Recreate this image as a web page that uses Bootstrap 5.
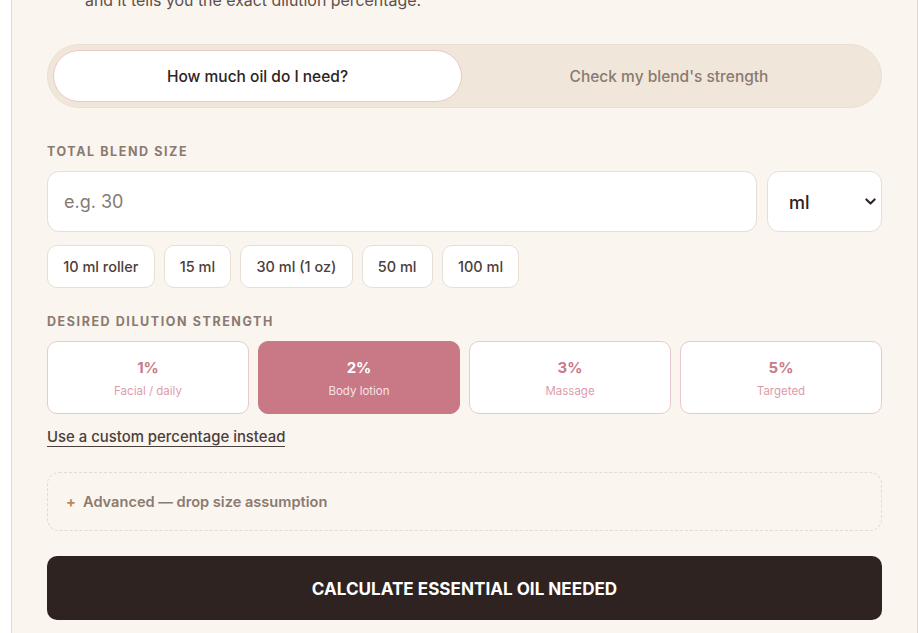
<!DOCTYPE html>
<html lang="en">
<head>
    <meta charset="UTF-8">
    <title>Essential Oil Dilution Calculator</title>
    <link href="https://cdn.jsdelivr.net/npm/bootstrap@5.3.0/dist/css/bootstrap.min.css" rel="stylesheet">
    <style>
        html, body { height: 100%; overflow: hidden; }
        body { font-family: "Inter", "Open Sans", sans-serif; background: #fff; color: #2e2321; }
        .calc-card { margin: -12px 0 0 11px; height: 700px; padding: 0 35px; background: #fbf5ef; border: 1px solid #e2dad2; border-top: 0; border-bottom: 0; border-radius: 0; }
        .intro { margin: 0 0 31px 38px; height: 25px; font-size: 15.9px; line-height: 25px; color: #5c504b; font-weight: 400; white-space: nowrap; }
        .mode-tabs { height: 64px; padding: 5px; background: #f0e6da; border: 1px solid #eadfd2; border-radius: 32px; }
        .mode-tabs .btn { flex: 1 1 0; border: 1px solid transparent; border-radius: 26px; font-size: 15.5px; font-weight: 500; color: #8a7a70; padding: 1px 0 0; }
        .mode-tabs .btn.active { flex: 0 0 409px; background: #fff; color: #2e2321; border-color: #e8c9c6; }
        .field-label { display: block; margin: 25px 0 12px; font-size: 12.5px; line-height: 18px; height: 16px; font-weight: 700; letter-spacing: 1.58px; text-transform: uppercase; color: #8a7a70; }
        .first-label { margin-top: 35px; }
        .input-row { gap: 10px; }
        .amount { flex: 1 1 0; height: 61px; border: 1px solid #e8dfd4; border-radius: 12px; font-size: 18px; padding: 0 16px; color: #2e2321; }
        .amount::placeholder { color: #857a72; }
        .unit { flex: 0 0 115px; width: 115px; height: 61px; border: 1px solid #e8dfd4; border-radius: 12px; font-size: 18px; font-weight: 500; padding: 2px 0 0 21px; color: #2e2321; background-image: url("data:image/svg+xml,%3csvg xmlns='http://www.w3.org/2000/svg' viewBox='0 0 16 16'%3e%3cpath fill='none' stroke='%232e2321' stroke-linecap='round' stroke-linejoin='round' stroke-width='3' d='m2 5 6 6 6-6'/%3e%3c/svg%3e"); background-position: right 5px center; background-size: 11px 11px; }
        .chips { gap: 9px; margin-top: 13px; }
        .chip { height: 43px; padding: 0 15.2px; background: #fff; border: 1px solid #e8dfd4; border-radius: 10px; font-size: 14.5px; font-weight: 500; color: #4a403c; }
        .strengths { gap: 9px; }
        .strength { height: 73px; flex: 1 1 0; padding: 1px 0 0; background: #fff; border: 1px solid #e8c9cf; border-radius: 10px; color: #c97a88; }
        .strength strong { display: block; font-size: 15px; line-height: 20px; font-weight: 700; }
        .strength small { display: block; margin-top: 5px; font-size: 11.5px; line-height: 16px; color: #dd9cab; }
        .strength.active { background: #c97886; border-color: #c97886; color: #fff; }
        .strength.active small { color: #f7e4e6; }
        .custom-link { display: inline-block; margin-top: 14px; font-size: 14.9px; font-weight: 500; line-height: 18px; color: #4a403c; text-decoration: none; border-bottom: 1px solid #4a403c; }
        .advanced { height: 59px; margin-top: 24px; padding: 2px 18px 0; border: 1px dashed #e3dbd2; border-radius: 12px; font-size: 14.6px; font-weight: 600; color: #8a7a70; }
        .advanced .plus { color: #b88a4a; font-weight: 700; width: 17px; }
        .calc-btn { display: block; width: 100%; height: 64px; margin-top: 25px; padding-top: 7px; background: #2e2321; border: 0; border-radius: 10px; color: #fff; font-size: 17.1px; font-weight: 700; }
        .calc-btn:hover { background: #2e2321; color: #fff; }
    </style>
</head>
<body>
<div class="calc-card">
    <p class="intro">and it tells you the exact dilution percentage.</p>

    <div class="mode-tabs d-flex">
        <button class="btn active">How much oil do I need?</button>
        <button class="btn">Check my blend's strength</button>
    </div>

    <label class="field-label first-label" for="blendSize">Total blend size</label>
    <div class="d-flex input-row">
        <input type="text" id="blendSize" class="form-control amount" placeholder="e.g. 30">
        <select class="form-select unit">
            <option>ml</option>
            <option>oz</option>
        </select>
    </div>

    <div class="d-flex chips">
        <button class="btn chip">10 ml roller</button>
        <button class="btn chip">15 ml</button>
        <button class="btn chip">30 ml (1 oz)</button>
        <button class="btn chip">50 ml</button>
        <button class="btn chip">100 ml</button>
    </div>

    <label class="field-label">Desired dilution strength</label>
    <div class="d-flex strengths">
        <button class="btn strength"><strong>1%</strong><small>Facial / daily</small></button>
        <button class="btn strength active"><strong>2%</strong><small>Body lotion</small></button>
        <button class="btn strength"><strong>3%</strong><small>Massage</small></button>
        <button class="btn strength"><strong>5%</strong><small>Targeted</small></button>
    </div>
    <a href="#" class="custom-link">Use a custom percentage instead</a>

    <div class="advanced d-flex align-items-center">
        <span class="plus">+</span>
        <span>Advanced — drop size assumption</span>
    </div>

    <button class="btn calc-btn">CALCULATE ESSENTIAL OIL NEEDED</button>
</div>
</body>
</html>
